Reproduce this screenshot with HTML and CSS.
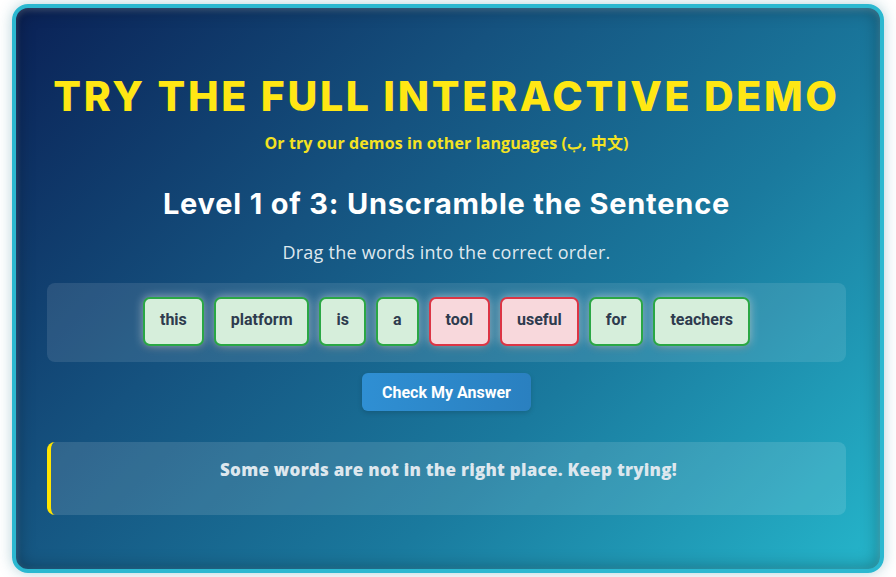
FILE: index.html
```html
<!DOCTYPE html>
<html lang="en">
<head>
<meta charset="utf-8">
<title>Interactive Demo</title>
<link rel="stylesheet" href="styles.css">
</head>
<body>
<section class="card">
  <h1 class="title">TRY THE FULL INTERACTIVE DEMO</h1>
  <p class="langs">Or try our demos in other languages (ب, <span class="cjk">中文</span>)</p>
  <h2 class="level">Level 1 of 3: Unscramble the Sentence</h2>
  <p class="hint">Drag the words into the correct order.</p>
  <div class="words">
    <span class="word ok">this</span>
    <span class="word ok">platform</span>
    <span class="word ok">is</span>
    <span class="word ok">a</span>
    <span class="word bad">tool</span>
    <span class="word bad">useful</span>
    <span class="word ok">for</span>
    <span class="word ok">teachers</span>
  </div>
  <div class="actions">
    <button class="check">Check My Answer</button>
  </div>
  <div class="feedback">Some words are not in the right place. Keep trying!</div>
</section>
</body>
</html>
```
FILE: styles.css
```css
html, body {
  margin: 0;
  padding: 0;
  background: #ffffff;
}
body {
  padding: 4px 12px 4px 12px;
  font-family: "Open Sans", "Noto Sans", sans-serif;
}
.card {
  box-sizing: border-box;
  height: 569px;
  border: 4px solid #2bb8d0;
  border-radius: 16px;
  padding: 0 34px 0 31px;
  background: linear-gradient(135deg, #0a2156 0%, #15527f 35%, #1a7a9e 65%, #25b6cb 100%);
  box-shadow: 0 0 14px rgba(40, 120, 140, 0.35), inset 0 0 18px rgba(0, 0, 0, 0.35), inset 0 2px 6px rgba(255,255,255,0.25);
  text-align: center;
  overflow: hidden;
}
.title {
  margin: 63px 0 0;
  font-family: "Inter", sans-serif;
  font-weight: 800;
  font-size: 41px;
  line-height: 50px;
  letter-spacing: 2.7px;
  color: #ffe714;
}
.langs {
  margin: 10px 0 0;
  font-family: "Open Sans", sans-serif;
  font-weight: 700;
  font-size: 16px;
  line-height: 22px;
  letter-spacing: 0.1px;
  color: #f4e222;
}
.cjk {
  font-family: "Noto Sans CJK SC", sans-serif;
}
.level {
  margin: 33px 0 0;
  font-family: "Inter", sans-serif;
  font-weight: 700;
  font-size: 29px;
  line-height: 34px;
  letter-spacing: 0.8px;
  color: #ffffff;
}
.hint {
  margin: 19px 0 0;
  font-family: "Open Sans", sans-serif;
  font-size: 18px;
  line-height: 24px;
  letter-spacing: 0.25px;
  color: #dfe8ee;
}
.words {
  margin-top: 19px;
  height: 79px;
  box-sizing: border-box;
  padding-top: 14px;
  border-radius: 8px;
  background: rgba(255, 255, 255, 0.1);
  display: flex;
  justify-content: center;
  align-items: flex-start;
  gap: 10px;
}
.word {
  box-sizing: border-box;
  height: 49px;
  padding: 11px 15px 0;
  border: 2px solid #2aa745;
  border-radius: 7px;
  font-family: "Roboto", sans-serif;
  font-weight: 700;
  font-size: 16px;
  line-height: 19px;
  color: #2e3b4e;
  box-shadow: 0 0 10px rgba(255, 255, 255, 0.55), 0 3px 6px rgba(0, 0, 0, 0.2);
}
.word.ok {
  background: #d6eedb;
  border-color: #2aa745;
}
.word.bad {
  background: #f8d8dc;
  border-color: #dc3545;
}
.actions {
  margin-top: 11px;
  display: flex;
  justify-content: center;
}
.check {
  box-sizing: border-box;
  height: 38px;
  padding: 0 20px;
  border: none;
  border-radius: 6px;
  background: linear-gradient(90deg, #2f8fd3, #2a80c0);
  color: #ffffff;
  font-family: "Roboto", sans-serif;
  font-weight: 700;
  font-size: 16px;
  box-shadow: 0 2px 5px rgba(0,0,0,0.15);
}
.feedback {
  margin-top: 31px;
  box-sizing: border-box;
  height: 73px;
  padding: 16px 20px 0;
  border-left: 4px solid #ffe400;
  border-radius: 8px;
  background: rgba(255, 255, 255, 0.12);
  font-family: "Open Sans", sans-serif;
  font-weight: 800;
  font-size: 17px;
  line-height: 24px;
  letter-spacing: 0.25px;
  color: #dde7ee;
}
```
